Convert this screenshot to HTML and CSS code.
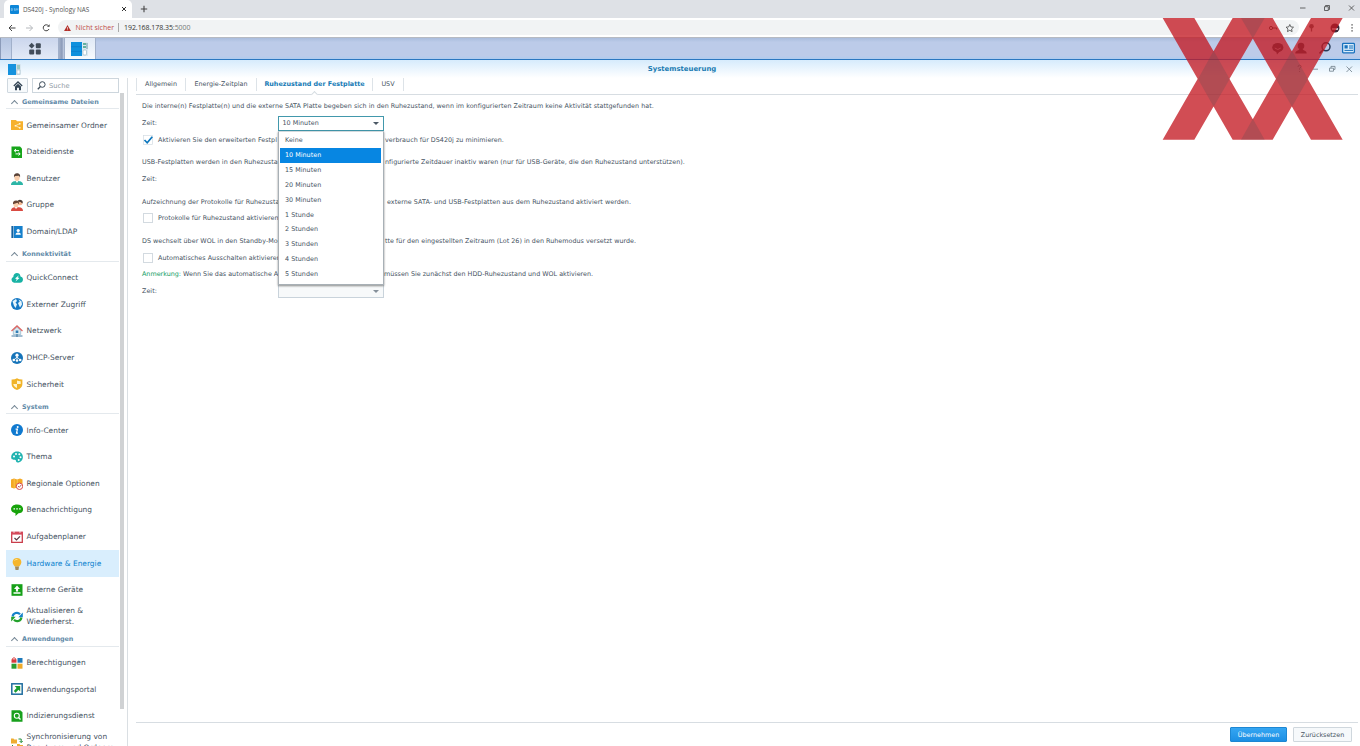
FILE: index.html
```html
<!DOCTYPE html>
<html lang="de">
<head>
<meta charset="utf-8">
<title>DS420j - Synology NAS</title>
<link rel="stylesheet" href="styles.css">
</head>
<body>
<header class="tabstrip">
  <div class="browser-tab">
    <svg class="favicon" viewBox="0 0 9 9"><rect width="9" height="9" rx="1" fill="#0d86d8"/><path d="M1.300 3.500h1v2h-1zM5.300 3.500h-1v1h1v1h-1M6.300 5.500v-2l.8 1 .8-1v2" stroke="#9fd2f2" stroke-width=".6" fill="none"/></svg>
    <span class="tab-title">DS420j - Synology NAS</span>
    <svg class="tab-x" viewBox="0 0 6 6"><path d="M1 1l4 4M5 1l-4 4" stroke="#333" stroke-width="1"/></svg>
  </div>
  <svg class="tab-plus" viewBox="0 0 8 8"><path d="M4 .8v6.400M.8 4h6.400" stroke="#444" stroke-width="1.100"/></svg>
  <svg class="win-controls" viewBox="0 0 60 16"><g fill="none" stroke="#444" stroke-width=".8"><path d="M0 7h5.500M24.500 5.700h3.800v3.800h-3.800zM25.500 5.500v-1h4v4h-1M49 4.500l5 5M54 4.500l-5 5"/></g></svg>
</header>
<div class="toolbar">
  <svg class="nav-icons" viewBox="0 0 50 12"><g fill="none" stroke-width="1"><path d="M7.500 6H1M4 3L1 6l3 3" stroke="#444"/><path d="M18 6h6.500M21.500 3l3 3-3 3" stroke="#b5b8bc"/><path d="M40.500 3.800A3 3 0 1 0 41 7" stroke="#444"/><path d="M41.600 2.200v2.600H39z" fill="#444"/></g></svg>
  <div class="address">
    <svg class="warn" viewBox="0 0 8 7"><path d="M4 0l4 7H0z" fill="#b3302a"/><path d="M4 2.500v2M4 5.200v.8" stroke="#fff" stroke-width=".8"/></svg>
    <span class="unsafe">Nicht sicher</span><span class="addr-sep"></span><span class="url">192.168.178.35<em>:5000</em></span>
    <svg class="addr-tools" viewBox="0 0 40 12"><g fill="none" stroke="#444"><circle cx="5" cy="6" r="1.600"/><path d="M6.500 6h4.200v1.500"/><path d="M23.800 2.500l1.100 2.400 2.600.3-1.900 1.800.5 2.600-2.300-1.300-2.300 1.300.5-2.600L20.100 5.200l2.600-.3z" stroke-width=".8"/></g></svg>
  </div>
  <svg class="ext-icons" viewBox="0 0 60 12"><circle cx="12.500" cy="4.300" r="2.300" fill="#666"/><path d="M12.500 4v5.500" stroke="#666" stroke-width="1.300"/><circle cx="36" cy="6" r="4.500" fill="#3c2a3a"/><path d="M33 7h6" stroke="#d9d0d5" stroke-width="1.800"/><path d="M52.400 2.300h1.300v1.300h-1.300zM52.400 5.300h1.300v1.300h-1.300zM52.400 8.300h1.300v1.300h-1.300z" fill="#444"/></svg>
</div>
<nav class="taskbar">
  <div class="task-edge"></div>
  <div class="task task-menu"><svg viewBox="0 0 14 14"><g fill="#414c59"><path d="M3.700 .8l2.900 2.900-2.900 2.900L.8 3.700z"/><rect x="7.800" y="1.200" width="5" height="5" rx="1"/><rect x="1.200" y="7.600" width="5" height="5" rx="1"/><rect x="7.800" y="7.600" width="5" height="5" rx="1"/></g></svg></div>
  <div class="task-gap"></div>
  <div class="task task-app"><svg viewBox="0 0 18 14"><rect width="11" height="14" fill="#0e90dd"/><path d="M0 4.700h11M0 9.300h11" stroke="#0875c4" stroke-width=".6"/><rect x="11" width="6" height="14" fill="#dce9f1"/><path d="M12 2h3M12 5h3" stroke="#3b9f83" stroke-width="1.500"/><path d="M16 1v6" stroke="#6d9ba5"/><rect x="12" y="8" width="3.500" height="5" rx="1" fill="#fff" stroke="#8faec0" stroke-width=".6"/></svg></div>
  <svg class="tray" viewBox="0 0 100 20"><g fill="#34445a"><ellipse cx="17.800" cy="9.600" rx="5.600" ry="4.600"/><path d="M16 13l1 3.500 3-3.500z"/><circle cx="41" cy="8" r="3.300"/><path d="M35.300 15.500c0-3 3-2.500 4-4.500h3.400c1 2 4 1.500 4 4.500z"/></g><path d="M14.800 10q3 3 6 0" fill="none" stroke="#a7b5d2"/><g fill="none" stroke="#273a58" stroke-width="1.500"><circle cx="66" cy="8.800" r="4"/><path d="M63 12l-3.500 3.400"/></g><rect x="82.600" y="5.400" width="11.800" height="9.400" rx=".8" fill="#d8ebfa" stroke="#1771bd" stroke-width="1.300"/><path d="M84.500 7.200h3.200v3.300h-3.200z" fill="#1771bd"/><path d="M89 8h4M89 10h4M84.500 12.400H93" stroke="#1771bd"/></svg>
</nav>
<div class="window">
  <div class="titlebar">
    <svg class="title-icon" viewBox="0 0 13 11"><rect width="8" height="11" fill="#1592de"/><rect x="8" width="4.500" height="11" fill="#cfdee5"/><path d="M9 2h3M9 4h3" stroke="#6eb49f"/><rect x="9" y="6" width="3" height="4" fill="#fff" stroke="#91afbf" stroke-width=".5"/></svg>
    <span class="title-text">Systemsteuerung</span>
    <svg class="title-controls" viewBox="0 0 60 12"><g fill="none" stroke="#6e7d89" stroke-width=".8"><path d="M2 4q0-1.800 1.600-1.800t1.600 1.600L3.600 5.500v1.200M3.600 8v1M17 6.200h5M33.500 5.200h4v3h-4zM35 5v-1.600h4v3h-1.400M50.500 3.500l5.500 5.500M56 3.500L50.500 9"/></g></svg>
  </div>
  <div class="body">
    <aside class="sidebar">
      <div class="searchrow">
        <div class="home"><svg viewBox="0 0 10 10"><path d="M.8 5L5 1l4.200 4" fill="none" stroke="#344656" stroke-width="1.300"/><path d="M2 5.500L5 2.700l3 2.800V9.300H6V6.800H4v2.500H2z" fill="#344656"/></svg></div>
        <div class="search"><svg viewBox="0 0 9 9"><circle cx="5.300" cy="3.500" r="2.800" fill="none" stroke="#3c4b59"/><path d="M3.400 5.500L.8 8.300" stroke="#3c4b59" stroke-width="1.300"/></svg><span>Suche</span></div>
      </div>
      <div class="navwrap">
        <div class="nav">
          <h2><i></i>Gemeinsame Dateien</h2>
          <div class="item"><svg viewBox="0 0 12 12"><path d="M0 1h5l1 1.300h6V11H0z" fill="#f6b12d"/><path d="M9 4.500L4.500 6.700 9 9" fill="none" stroke="#fff0c6" stroke-width=".8"/><path d="M8 4h1.500v1.500H8zM3.700 6h1.500v1.500H3.700zM8 8h1.500v1.500H8z" fill="#fff4d7"/></svg><span>Gemeinsamer Ordner</span></div>
          <div class="item"><svg viewBox="0 0 12 12"><path d="M.5 .5h8.500l2 2V12H.5z" fill="#17a51b"/><path d="M8 4.600H3.500M5 3L3.200 4.600 5 6.200M4.500 7.900H9M7.500 6.300l1.700 1.600-1.700 1.600" fill="none" stroke="#fff" stroke-width="1"/></svg><span>Dateidienste</span></div>
          <div class="item"><svg viewBox="0 0 12 12"><path d="M0 12c0-3.500 3-4 6-4s6 .5 6 4z" fill="#2cb5a6"/><path d="M4.300 7.500L6 10l1.700-2.500z" fill="#fff"/><ellipse cx="6" cy="4.700" rx="2.600" ry="3.300" fill="#f9ceac"/><path d="M3 4.500C2.500 1.500 4 .2 6 .2s3.700 1 3 4.300L8 2.700 4 3z" fill="#584137"/></svg><span>Benutzer</span></div>
          <div class="item"><svg viewBox="0 0 12 12"><circle cx="9" cy="3.800" r="2.500" fill="#f3b893"/><path d="M6 2.600Q8-.4 11 1.400q1.200 1.400.4 3L9.500 3z" fill="#4b3b35"/><path d="M0 12c0-3.500 3-3.700 5-3.700 2 0 7-1 7 3.700z" fill="#d94b42"/><path d="M3.500 8L5 10l1.700-2z" fill="#fff"/><ellipse cx="5" cy="5.400" rx="2.500" ry="2.900" fill="#f9ceac"/><path d="M2 5.200Q1.600 1.600 5 1.500T8 5.200L6.500 3.800z" fill="#684535"/></svg><span>Gruppe</span></div>
          <div class="item"><svg viewBox="0 0 12 12"><rect x=".4" width="2" height="12" fill="#14609f"/><rect x="2.800" width="8.800" height="12" fill="#1680cc"/><circle cx="7.200" cy="4.500" r="1.600" fill="#fff"/><path d="M4.500 8.800q0-2 2-2.200h1.400q2 .2 2 2.200z" fill="#fff"/></svg><span>Domain/LDAP</span></div>
          <h2><i></i>Konnektivität</h2>
          <div class="item"><svg viewBox="0 0 12 12"><path d="M3 10.700a3 3 0 0 1-.7-5.700C2.200 0 9.200-.2 9.500 4.500c3.500.5 3.200 6.200-.5 6.200z" fill="#18b2a4"/><path d="M8 3.200L4 6.500l1.800.4L4.500 9.400l4-3.400-1.800-.5z" fill="#fff"/></svg><span>QuickConnect</span></div>
          <div class="item"><svg viewBox="0 0 12 12"><circle cx="6" cy="6" r="6" fill="#1679c4"/><path d="M1.500 3.300L5 1l1 2-1.500 1.500L6 6.300 4.600 10 3 7.700zM7.500 1.500l3 1.700.5 3.300-2 3L7.800 7 7 5l1.700-1.200z" fill="#e5f4fb"/></svg><span>Externer Zugriff</span></div>
          <div class="item"><svg viewBox="0 0 12 12"><path d="M2.300 5.500L6 2.200l3.700 3.300v4H2.300z" fill="#dce9ef" stroke="#7ba8c3" stroke-width=".6"/><path d="M.5 6L6 1l5.500 5" fill="none" stroke="#dc6764" stroke-width="1.300"/><rect x="4.700" y="5.500" width="2.600" height="2.500" fill="#317eb7"/><path d="M.5 11h11M6 9v3" stroke="#477da5" stroke-width="1.200"/></svg><span>Netzwerk</span></div>
          <div class="item"><svg viewBox="0 0 12 12"><circle cx="6" cy="6" r="6" fill="#1674b9"/><path d="M6 3.500V7M6 5L2.800 8M6 5l3.200 3" stroke="#fff" stroke-width=".8"/><g fill="#fff"><circle cx="6" cy="3.200" r="1.600"/><circle cx="2.800" cy="8" r="1.300"/><circle cx="6" cy="8.500" r="1.300"/><circle cx="9.200" cy="8" r="1.300"/></g></svg><span>DHCP-Server</span></div>
          <div class="item"><svg viewBox="0 0 12 12"><path d="M.6 1.600Q4 1.700 6 .3q2 1.400 5.400 1.300V6q0 4-5.400 6Q.6 10 .6 6z" fill="#f1b326"/><path d="M6 2.400q1.500.7 3.700.8V6H6zM2.300 6H6v4Q2.500 8.600 2.300 6z" fill="#fff3cc"/></svg><span>Sicherheit</span></div>
          <h2><i></i>System</h2>
          <div class="item"><svg viewBox="0 0 12 12"><circle cx="6" cy="6" r="6" fill="#0f79cf"/><circle cx="6.700" cy="2.900" r="1" fill="#fff"/><path d="M4.600 5.200h1.800L5.500 9.200h1.500" fill="none" stroke="#fff" stroke-width="1.200"/></svg><span>Info-Center</span></div>
          <div class="item"><svg viewBox="0 0 12 12"><path d="M6 .5c8 0 7.500 11 .5 11-2 0-.8-2.500-2.600-2.700C2 8.500.2 9 .2 6S2.500.5 6 .5z" fill="#20b3b0"/><g fill="#fff"><circle cx="3" cy="5.500" r="1"/><circle cx="5" cy="2.900" r="1"/><circle cx="8.300" cy="3.300" r="1"/><circle cx="9.500" cy="6.300" r="1"/><circle cx="7.700" cy="9" r="1"/></g></svg><span>Thema</span></div>
          <div class="item"><svg viewBox="0 0 12 12"><path d="M0 1.500L3 .5l3.200 1L9 .5l2.500 1V8L9 10l-3-.5-3 1-3-1z" fill="#f4a924"/><path d="M3.200 .8v9M6.300 1.500v8" stroke="#ffd571" stroke-width=".6"/><circle cx="8.500" cy="8.300" r="3.200" fill="#fff" stroke="#d74a4a"/><path d="M7 8l1.300 1.300L10.200 7" fill="none" stroke="#a33b3b" stroke-width=".8"/></svg><span>Regionale Optionen</span></div>
          <div class="item"><svg viewBox="0 0 12 12"><path d="M6 .5c8 0 7.800 8.700 1.500 8.700L4.500 12V9.200C-2 8.500-1.300.5 6 .5z" fill="#17a30b"/><path d="M2.500 4.900h1.500M5.300 4.900h1.500M8.100 4.900h1.500" stroke="#fff" stroke-width="1.400"/></svg><span>Benachrichtigung</span></div>
          <div class="item"><svg viewBox="0 0 12 12"><rect x=".7" y="1.400" width="10.600" height="10" fill="#fff" stroke="#c93d4b" stroke-width="1.300"/><path d="M0 .8h12v2.800H0z" fill="#d4495a"/><path d="M3 0v2M9 0v2" stroke="#fff" stroke-width=".7"/><path d="M3.500 7l2 2 3.500-3.700" fill="none" stroke="#583943" stroke-width="1.200"/></svg><span>Aufgabenplaner</span></div>
          <div class="item active"><svg viewBox="0 0 12 12"><path d="M3.800 8.500C0 5 1.500.1 6 .1s6 4.900 2.200 8.400z" fill="#f6b62c"/><path d="M3.500 2.500Q4.700 1 6.500 1.500" fill="none" stroke="#ffdf83"/><path d="M4 8.500h4L7.500 12h-3z" fill="#a58b5c"/></svg><span>Hardware &amp; Energie</span></div>
          <div class="item"><svg viewBox="0 0 12 12"><rect x=".5" y=".2" width="11" height="11.600" fill="#16a018"/><path d="M6 1.600l3 3.300H7.100v2.600H4.900V4.900H3zM2.500 8.200h7v1.600h-7z" fill="#fff"/></svg><span>Externe Geräte</span></div>
          <div class="item two"><svg viewBox="0 0 12 12"><path d="M1.600 5.500A4.300 4.300 0 0 1 9 3.200" fill="none" stroke="#1682c9" stroke-width="2.200"/><path d="M11.800 1.600v4.700H7.300z" fill="#1682c9"/><path d="M10.400 6.500A4.300 4.300 0 0 1 3 8.800" fill="none" stroke="#23a22c" stroke-width="2.200"/><path d="M.2 10.400V5.700h4.500z" fill="#23a22c"/></svg><span>Aktualisieren &amp;<br>Wiederherst.</span></div>
          <h2><i></i>Anwendungen</h2>
          <div class="item"><svg viewBox="0 0 12 12"><path d="M.5 2.300h5v3.400h-5z" fill="#d93b3d"/><path d="M1.500 2.700V1.600Q3-.2 4.500 1.600v1.100" fill="none" stroke="#d93b3d"/><path d="M6.500 1h5v4.700h-5z" fill="#1c79ba"/><path d="M.5 6.700h5v5h-5z" fill="#2a9e30"/><path d="M6.500 6.700h5v5h-5z" fill="#efaa28"/></svg><span>Berechtigungen</span></div>
          <div class="item"><svg viewBox="0 0 12 12"><rect x=".8" y=".8" width="10.400" height="10.400" fill="#fff" stroke="#216e9f" stroke-width="1.500"/><path d="M3.700 3h5.500v5.500L7.500 6.800 4.600 9.700 2.800 7.900 5.600 5z" fill="#189c2e"/></svg><span>Anwendungsportal</span></div>
          <div class="item"><svg viewBox="0 0 12 12"><path d="M.5 .3h8.700l2.300 2v9.500H.5z" fill="#18a01c"/><circle cx="5.800" cy="5.800" r="2.500" fill="none" stroke="#fff" stroke-width="1.100"/><path d="M7.500 7.500l2 2" stroke="#fff" stroke-width="1.200"/></svg><span>Indizierungsdienst</span></div>
          <div class="item two"><svg viewBox="0 0 12 12"><path d="M0 1.500h2.500l.7 1H6v4H0zM6 7h2.500l.7 1H12v4H6z" fill="#efad31"/><path d="M7.500 2h2.700v3M8.700 4l1.500 1.700L11.700 4M1.500 8v2h3" fill="none" stroke="#258f3c"/></svg><span>Synchronisierung von<br>Benutzern und Ordnern</span></div>
        </div>
        <div class="scroll"><div></div></div>
      </div>
    </aside>
    <main class="main">
      <div class="tabs"><span class="t1">Allgemein</span><span class="t2">Energie-Zeitplan</span><span class="t3">Ruhezustand der Festplatte</span><span class="t4">USV</span></div>
      <div class="form">
        <div class="row r1"><span>Die interne(n) Festplatte(n) und die externe SATA Platte begeben sich in den Ruhezustand, wenn im konfigurierten Zeitraum keine Aktivität stattgefunden hat.</span></div>
        <div class="row"><span class="label">Zeit:</span>
          <div class="select open"><span>10 Minuten</span><b></b>
            <ul class="menu"><li>Keine</li><li class="sel">10 Minuten</li><li>15 Minuten</li><li>20 Minuten</li><li>30 Minuten</li><li>1 Stunde</li><li>2 Stunden</li><li>3 Stunden</li><li>4 Stunden</li><li>5 Stunden</li></ul>
          </div></div>
        <div class="row short end"><span class="left"><svg class="check" viewBox="0 0 10 10"><rect x=".5" y=".5" width="9" height="9" fill="#fff" stroke="#d3dce3" stroke-width=".7"/><path d="M1.500 5l2.700 2.800L9.300 1.800" fill="none" stroke="#0d77bd" stroke-width="1.700"/></svg>Aktivieren Sie den erweiterten Festpl</span><span class="right">verbrauch für DS420j zu minimieren.</span></div>
        <div class="row r4"><span class="left">USB-Festplatten werden in den Ruhezusta</span><span class="right">nfigurierte Zeitdauer inaktiv waren (nur für USB-Geräte, die den Ruhezustand unterstützen).</span></div>
        <div class="row end"><span class="label">Zeit:</span></div>
        <div class="row r6"><span class="left">Aufzeichnung der Protokolle für Ruhezusta</span><span class="right">externe SATA- und USB-Festplatten aus dem Ruhezustand aktiviert werden.</span></div>
        <div class="row short end up"><span class="left"><i class="box"></i>Protokolle für Ruhezustand aktivieren</span></div>
        <div class="row"><span class="left">DS wechselt über WOL in den Standby-Mo</span><span class="right">tte für den eingestellten Zeitraum (Lot 26) in den Ruhemodus versetzt wurde.</span></div>
        <div class="row short"><span class="left"><i class="box"></i>Automatisches Ausschalten aktivieren</span></div>
        <div class="row r10"><span class="left"><em>Anmerkung:</em> Wenn Sie das automatische A</span><span class="right">müssen Sie zunächst den HDD-Ruhezustand und WOL aktivieren.</span></div>
        <div class="row"><span class="label">Zeit:</span><div class="select off"><b></b></div></div>
      </div>
      <footer class="footer"><div class="btn primary">Übernehmen</div><div class="btn">Zurücksetzen</div></footer>
    </main>
  </div>
</div>
<svg class="watermark" viewBox="0 0 690 435"><path d="M98 54h95l211 365h-96zM308 54h96L193 419H98zM333 54h95l210 365h-95zM543 54h95L428 419h-95z" fill="#c31820" fill-opacity=".77"/><path d="M251 152l48 85-48 83-47-83zM486 152l48 85-48 83-48-83zM333 54h71l-35.500 61zM333 419h71l-35.500-63z" fill="#4c4a50" fill-opacity=".23"/></svg>
</body>
</html>
```

FILE: styles.css
```css
* { box-sizing: border-box; }
body {
  margin: 0;
  width: 1360px;
  height: 746px;
  overflow: hidden;
  display: flex;
  flex-direction: column;
  position: relative;
  background: #fff;
  color: #46535f;
  font-family: "DejaVu Sans", Verdana, sans-serif;
  font-size: 6.4px;
}
svg { display: block; flex: none; }
em { font-style: normal; }

/* Browser chrome */
.tabstrip { height: 18px; flex: none; background: #dee1e6; display: flex; align-items: center; }
.browser-tab { width: 128px; height: 18px; margin-left: 4px; padding: 0 5px 0 6px; background: #fff; border-radius: 5px 5px 0 0; display: flex; align-items: center; }
.favicon { width: 9px; height: 9px; }
.tab-title { margin-left: 4px; flex: 1; font: 6.350px "Open Sans", sans-serif; color: #555; white-space: nowrap; }
.tab-x { width: 6px; height: 6px; }
.tab-plus { width: 8px; height: 8px; margin-left: 8px; }
.win-controls { width: 60px; height: 16px; margin-left: auto; }
.toolbar { height: 20px; flex: none; display: flex; align-items: center; padding-left: 8px; border-bottom: 1px solid #b6bac2; }
.nav-icons { width: 50px; height: 12px; }
.address { width: 1241px; height: 15px; border-radius: 8px; background: #f1f3f4; display: flex; align-items: center; padding-left: 6px; font: 7px "Open Sans", sans-serif; white-space: nowrap; }
.warn { width: 7px; height: 6px; }
.unsafe { color: #c0504a; margin-left: 4.500px; width: 39px; }
.addr-sep { width: 1px; height: 9px; background: #aaa; margin: 0 5px 0 3.500px; }
.url { color: #333; letter-spacing: -.05px; }
.url em { color: #777; }
.addr-tools { width: 40px; height: 12px; margin: 0 -7px 0 auto; }
.ext-icons { width: 60px; height: 12px; }

/* Desktop task bar */
.taskbar { height: 22px; flex: none; display: flex; background: linear-gradient(#aabddd, #bccbe9 20%, #bccbe9 85%, #aecbef); border-bottom: 1.500px solid #2b77c0; }
.task-edge { width: 11px; border-left: 1px solid #8b9bb9; background: linear-gradient(#b4c4e0, #cdd9ee); }
.task { height: 100%; display: flex; align-items: center; justify-content: center; background: linear-gradient(#cbd6ed, #e3eaf6); border: 1px solid #a1b0ca; border-width: 0 1px; }
.task-menu { width: 48px; }
.task-menu svg { width: 14px; height: 14px; }
.task-gap { width: 5px; background: linear-gradient(90deg, #a4b1c9, #8b9bb9 60%, #c7d2e6); }
.task-app { width: 32px; background: linear-gradient(#e0e9f6, #f7fafd); }
.task-app svg { width: 18px; height: 14px; }
.tray { width: 100px; height: 20px; margin-left: auto; }

/* Control panel window */
.window { flex: 1; min-height: 0; display: flex; flex-direction: column; }
.titlebar { height: 18px; flex: none; display: flex; align-items: center; background: linear-gradient(#d6ebfc, #fff); padding-left: 8px; }
.title-icon { width: 13px; height: 11px; }
.title-text { flex: 1; text-align: center; padding-left: 47px; font-size: 6.900px; font-weight: bold; color: #1a7bb2; }
.title-controls { width: 60px; height: 12px; margin-right: 4px; }
.body { flex: 1; min-height: 0; display: flex; }

.sidebar { width: 128px; border-right: 1px solid #dadfe3; padding-left: 6px; display: flex; flex-direction: column; }
.searchrow { height: 14.700px; flex: none; display: flex; gap: 4px; padding-left: 1px; }
.home { width: 21px; height: 15px; border: 1px solid #cfd8df; border-radius: 1px; background: #f7fafc; display: flex; align-items: center; justify-content: center; }
.home svg { width: 10px; height: 10px; }
.search { width: 87px; height: 15px; border: 1px solid #cdd6dd; display: flex; align-items: center; gap: 3px; padding-left: 4px; font-size: 6.700px; color: #909aa3; }
.search svg { width: 9px; height: 9px; }
.navwrap { flex: 1; min-height: 0; display: flex; overflow: hidden; }
.nav { width: 113px; flex: none; }
.nav h2 { margin: 0; height: 16.800px; margin-bottom: 2.500px; padding-left: 4px; border-bottom: 1px solid #e4e9ed; display: flex; align-items: center; gap: 4px; font-size: 6.400px; font-weight: bold; color: #5f8aa8; padding-top: 2px; }
.nav h2 i { width: 5px; height: 5px; margin: 3px 1.500px 0; border: solid #758795; border-width: 1px 0 0 1px; transform: rotate(45deg); }
.item { height: 26.650px; display: flex; align-items: center; padding-left: 5px; gap: 3.500px; font-size: 7.450px; line-height: 11px; white-space: nowrap; color: #46535f; }
.item span { margin-top: -.6px; }
.item svg { width: 12px; height: 12px; }
.item.active { background: #d9eefd; color: #0e83cf; }
.scroll { width: 5px; }
.scroll div { width: 4px; margin-left: 1px; height: 616px; background: #d0d2d4; }

.main { flex: 1; min-width: 0; padding: 0 2px 0 8px; display: flex; flex-direction: column; }
.tabs { height: 17px; flex: none; display: flex; align-items: flex-start; border-bottom: 1px solid #d7dde2; }
.tabs span { position: relative; height: 12.500px; border-right: 1px solid #dde3e8; text-align: center; line-height: 13px; white-space: nowrap; }
.tabs .t1 { width: 50px; border-left: 1px solid #dde3e8; }
.tabs .t2 { width: 71px; }
.tabs .t3 { width: 116px; font-weight: bold; color: #157ab5; }
.tabs .t3::after { content: ""; position: absolute; left: 55px; top: 14px; width: 4px; height: 4px; background: #fff; border: solid #d7dde2; border-width: 1px 0 0 1px; transform: rotate(45deg); }
.tabs .t4 { width: 31px; }
.form { flex: 1; padding: 2.500px 0 0 6px; }
.row { height: 17px; display: flex; align-items: center; white-space: nowrap; letter-spacing: .02px; }
.row.r1 { letter-spacing: .024px; }
.row.r4, .row.r6 { letter-spacing: .036px; }
.row.r10 { letter-spacing: 0; }
.row.short { height: 16px; }
.row.end { margin-bottom: 6px; }
.row.up { height: 15px; margin-bottom: 7px; }
.label { width: 136px; }
.left { width: 136px; display: flex; align-items: center; white-space: pre; }
.left em { color: #109b63; }
.right { margin-left: 107px; }
.r6 .right { margin-left: 109px; }
.r10 .right { margin-left: 106px; }
.check, .box { width: 10px; height: 10px; margin: 0 5px 0 1px; flex: none; }
.box { border: 1px solid #d3dae0; background: #fff; }
.select { position: relative; width: 106px; height: 15px; display: flex; align-items: center; justify-content: space-between; padding: 0 4px 0 3.500px; border: 1px solid #c9d3db; background: #fff; }
.select.open { border-color: #4298ac; }
.select b { margin-left: auto; border: 3px solid transparent; border-top: 3px solid #4b5965; border-bottom: 0; }
.select.off { background: #f7f9fa; height: 14px; }
.select.off b { border-top-color: #85909a; }
.menu { position: absolute; z-index: 2; left: -1px; top: 14px; width: 106px; height: 154px; margin: 0; padding: 1.500px 2px 2px 1px; list-style: none; background: #fff; border: 1px solid #a8b0b6; border-top-color: #d4dadd; box-shadow: 0 1px 2px rgba(0,0,0,.45); }
.menu li { height: 14.920px; line-height: 15px; padding-left: 5px; }
.menu .sel { background: #0786e2; color: #fff; }
.footer { height: 24px; flex: none; border-top: 1px solid #d7dde2; display: flex; justify-content: flex-end; align-items: center; gap: 6px; padding-right: 6px; }
.btn { width: 59px; height: 15px; border: 1px solid #cfd7dd; border-radius: 1px; background: #f6f9fb; text-align: center; line-height: 14px; }
.btn.primary { width: 57px; background: linear-gradient(#35a6f2, #1c8fe4); border-color: #1d87d3; color: #fff; }

.watermark { position: absolute; left: 1130px; top: 0; width: 230px; height: 145px; }
```
